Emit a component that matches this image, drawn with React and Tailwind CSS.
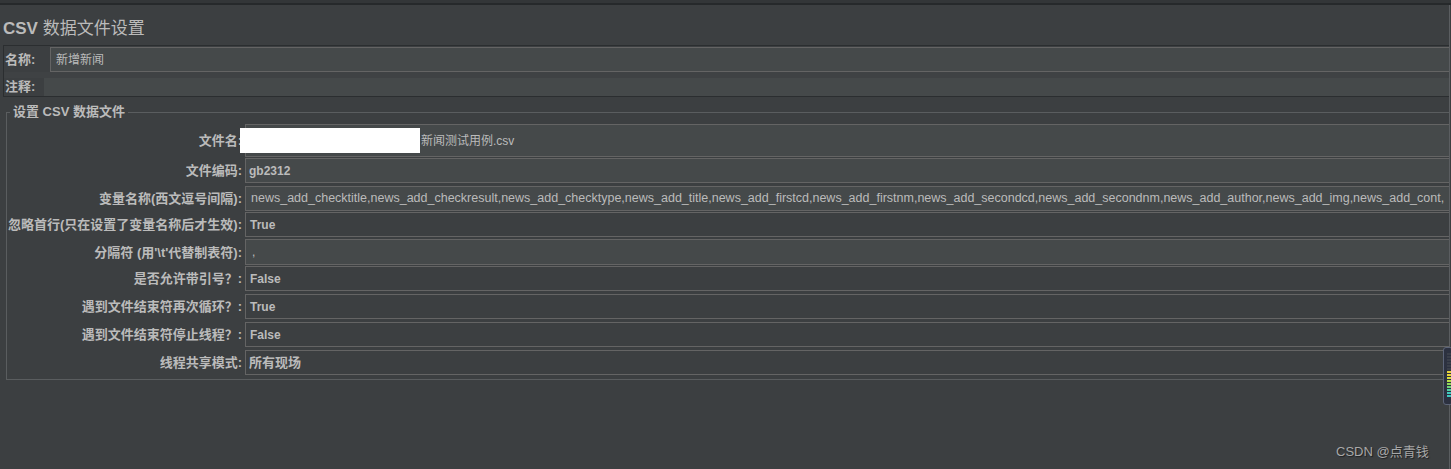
import React from 'react'

const cjk = { fontFamily: '"Liberation Sans", "Noto Sans CJK SC", sans-serif' }

const rows = [
	{ label: '文件名:', h: 'h-[33px]', mt: 'mt-0', value: '新闻测试用例.csv', field: true, weight: 'font-normal', pad: 'pl-[175px]' },
	{ label: '文件编码:', h: 'h-[25px]', mt: 'mt-[1px]', value: 'gb2312', field: true, weight: 'font-bold', pad: 'pl-[3px]' },
	{ label: '变量名称(西文逗号间隔):', h: 'h-[25px]', mt: 'mt-[3px]', value: 'news_add_checktitle,news_add_checkresult,news_add_checktype,news_add_title,news_add_firstcd,news_add_firstnm,news_add_secondcd,news_add_secondnm,news_add_author,news_add_img,news_add_cont,', field: true, weight: 'font-normal', pad: 'pl-[5px]', small: true },
	{ label: '忽略首行(只在设置了变量名称后才生效):', h: 'h-[25px]', mt: 'mt-[1px]', value: 'True', field: false, weight: 'font-bold', pad: 'pl-[4px]' },
	{ label: "分隔符 (用'\\t'代替制表符):", h: 'h-[26px]', mt: 'mt-[2px]', value: ',', field: true, weight: 'font-normal', pad: 'pl-[6px]' },
	{ label: '是否允许带引号？:', h: 'h-[25px]', mt: 'mt-[1px]', value: 'False', field: false, weight: 'font-bold', pad: 'pl-[4px]' },
	{ label: '遇到文件结束符再次循环？:', h: 'h-[25px]', mt: 'mt-[3px]', value: 'True', field: false, weight: 'font-bold', pad: 'pl-[4px]' },
	{ label: '遇到文件结束符停止线程？:', h: 'h-[25px]', mt: 'mt-[3px]', value: 'False', field: false, weight: 'font-bold', pad: 'pl-[4px]' },
	{ label: '线程共享模式:', h: 'h-[25px]', mt: 'mt-[3px]', value: '所有现场', field: false, weight: 'font-bold', pad: 'pl-[3px]', big: true },
]

function Row({ row, first }) {
	const size = row.big ? 'text-[13px]' : row.small ? 'text-[12.5px]' : 'text-[12px]'
	return (
		<div className={`relative flex items-center ${row.mt}`}>
			<div className="w-[235px] shrink-0 text-right text-[13px] font-bold leading-none text-[#bbbbbb] whitespace-nowrap">{row.label}</div>
			<div
				className={`ml-[3px] flex-1 ${row.h} flex items-center border border-[#646464] ${row.field ? 'bg-[#45494a]' : 'bg-[#3c3f41]'} ${row.pad} ${size} ${row.weight} text-[#bbbbbb] whitespace-nowrap overflow-hidden`}
			>
				{row.value}
			</div>
			{first && <div className="absolute left-[233px] top-[4px] w-[180px] h-[25px] bg-white" />}
		</div>
	)
}

function Meter() {
	const bars = ['#3a3f4a', '#3a3f4a', '#3a3f4a', '#3a3f4a', '#3a3f4a', '#3a3f4a', '#e8d23a', '#e8d23a', '#d6dc3a', '#b5dc48', '#8fd85a', '#6fd47a', '#4fd0a0', '#3fc8c0', '#3fc8c0']
	return (
		<div className="absolute left-[1443px] top-[347px] w-[10px] h-[58px] rounded-[3px] border border-[#5c6478] bg-[#2c3140] pl-[3px] pt-[5px] flex flex-col gap-[1px]">
			{bars.map((c, i) => (
				<div key={i} className="h-[2px] w-[6px]" style={{ backgroundColor: c }} />
			))}
		</div>
	)
}

export default function App() {
	return (
		<div className="relative w-[1451px] h-[469px] bg-[#3c3f41] overflow-hidden" style={cjk}>
			<div className="h-[3px] bg-[#333638]" />
			<div className="h-[2px] bg-[#26292b]" />
			<div className="flex">
				<div className="w-[1449px] h-[464px] overflow-hidden">
					<div className="pl-[3px] pt-[13px] h-[40px] text-[17px] leading-[22px] text-[#bbbbbb]">
						<span className="font-bold">CSV</span> 数据文件设置
					</div>
					<div className="ml-[3px] w-[1460px] border border-[#2b2e30] pt-[1px] pb-0">
						<div className="flex items-center h-[25px]">
							<div className="w-[46px] pl-[1px] text-[13px] font-bold text-[#bbbbbb]">名称:</div>
							<div className="flex-1 h-[25px] border border-[#646464] bg-[#45494a] pl-[5px] flex items-center text-[12px] text-[#bbbbbb]">新增新闻</div>
						</div>
						<div className="h-[6px] bg-[#3f4244]" />
						<div className="flex items-center h-[18px]">
							<div className="w-[40px] pl-[1px] text-[13px] font-bold text-[#bbbbbb]">注释:</div>
							<div className="flex-1 h-[18px] bg-[#45494a]" />
						</div>
					</div>
					<fieldset className="ml-[6px] mt-[7px] w-[1460px] border border-[#5a5d5f] pb-[4px]">
						<legend className="ml-[3px] px-[3px] text-[13px] font-bold leading-[16px] text-[#bbbbbb]">
							设置 CSV 数据文件
						</legend>
						<div className="pt-[4px] flex flex-col">
							{rows.map((r, i) => (
								<Row key={i} row={r} first={i === 0} />
							))}
						</div>
					</fieldset>
				</div>
				<div className="w-[1px] h-[464px] bg-[#5b5e61]" />
			</div>
			<Meter />
			<div className="absolute left-[1336px] top-[442px] text-[13px] text-[#a8a8a8] [text-shadow:1px_1px_1px_#1e2022]">CSDN @点青钱</div>
		</div>
	)
}
